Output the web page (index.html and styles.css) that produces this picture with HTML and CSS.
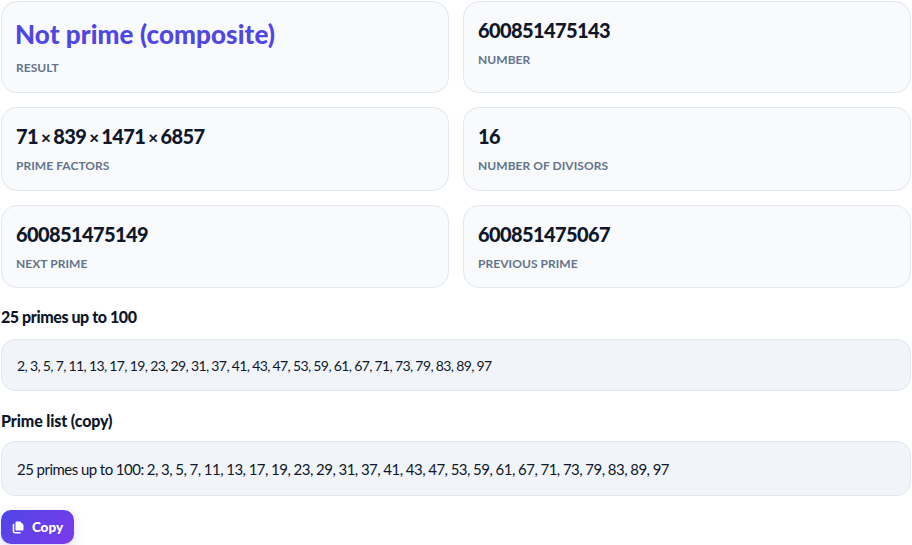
FILE: index.html
```html
<!DOCTYPE html>
<html lang="en">

<head>
    <meta charset="UTF-8">
    <meta name="viewport" content="width=device-width, initial-scale=1.0">
    <title>Prime checker</title>
    <link rel="stylesheet" href="styles.css">
</head>

<body>
    <div class="container">
        <div class="cards">
            <div class="card">
                <div class="value value-result">Not prime (composite)</div>
                <div class="label">Result</div>
            </div>
            <div class="card">
                <div class="value">600851475143</div>
                <div class="label">Number</div>
            </div>
            <div class="card">
                <div class="value">71 <span class="times">×</span> 839 <span class="times">×</span> 1471 <span class="times">×</span> 6857</div>
                <div class="label">Prime factors</div>
            </div>
            <div class="card">
                <div class="value">16</div>
                <div class="label">Number of divisors</div>
            </div>
            <div class="card">
                <div class="value">600851475149</div>
                <div class="label">Next prime</div>
            </div>
            <div class="card">
                <div class="value">600851475067</div>
                <div class="label">Previous prime</div>
            </div>
        </div>

        <h3 class="list-title">25 primes up to 100</h3>
        <div class="list-box">2, 3, 5, 7, 11, 13, 17, 19, 23, 29, 31, 37, 41, 43, 47, 53, 59, 61, 67, 71, 73, 79, 83, 89, 97</div>

        <h3 class="list-title list-title-copy">Prime list (copy)</h3>
        <div class="list-box list-box-copy">25 primes up to 100: 2, 3, 5, 7, 11, 13, 17, 19, 23, 29, 31, 37, 41, 43, 47, 53, 59, 61, 67, 71, 73, 79, 83, 89, 97</div>

        <button class="copy-btn" type="button">
            <svg class="copy-icon" viewBox="0 0 12 13" width="12" height="13" aria-hidden="true">
                <path d="M4.500 .5h3.300c.3 0 .5.1.7.3l2.700 2.700c.2.2.3.4.3.7v4.300c0 .6-.4 1-1 1H4.500c-.6 0-1-.4-1-1v-7c0-.6.4-1 1-1z" fill="#fff"/>
                <path d="M1.500 3.500v6.800c0 .9.6 1.500 1.500 1.500h5" fill="none" stroke="#fff" stroke-width="1.600" stroke-linecap="round"/>
            </svg>
            Copy
        </button>
    </div>
</body>

</html>
```

FILE: styles.css
```css
* {
    margin: 0;
    padding: 0;
    box-sizing: border-box;
}

html,
body {
    height: 545px;
    overflow: hidden;
}

body {
    font-family: "Lato", sans-serif;
    background-color: #fff;
    color: #0f172a;
}

.container {
    padding: 1px;
}

.cards {
    display: grid;
    grid-template-columns: 1fr 1fr;
    grid-template-rows: 92px 84px 83px;
    gap: 14px;
}

.card {
    background-color: #f8fafc;
    border: 1px solid #e2e8f0;
    border-radius: 16px;
    padding: 14px;
}

.value {
    font-size: 20px;
    line-height: 28px;
    font-weight: 900;
    letter-spacing: -0.6px;
    word-spacing: -1.2px;
    color: #0f172a;
}

.times {
    font-size: 17px;
    line-height: 1;
}

.value-result {
    margin-left: -1px;
    font-size: 26px;
    line-height: 36px;
    letter-spacing: 0.1px;
    word-spacing: 0;
    color: #4f46e5;
}

.label {
    margin-top: 8px;
    font-size: 12px;
    line-height: 16px;
    font-weight: 700;
    letter-spacing: 0.05px;
    text-transform: uppercase;
    color: #64748b;
}

.list-title {
    margin-top: 19px;
    font-size: 16px;
    line-height: 20px;
    font-weight: 900;
    letter-spacing: -0.42px;
    color: #0f172a;
}

.list-title-copy {
    margin-top: 20px;
    letter-spacing: -0.12px;
}

.list-box {
    margin-top: 12px;
    height: 52px;
    padding: 0 15px;
    display: flex;
    align-items: center;
    background-color: #f1f5f9;
    border: 1px solid #e2e8f0;
    border-radius: 14px;
    font-size: 14px;
    letter-spacing: -0.6px;
    word-spacing: -0.2px;
    color: #0f172a;
}

.list-box-copy {
    margin-top: 10px;
    height: 55px;
    font-size: 15px;
    letter-spacing: -0.5px;
}

.copy-btn {
    margin-top: 14px;
    height: 34px;
    width: 73px;
    display: flex;
    align-items: center;
    justify-content: center;
    gap: 8px;
    border: none;
    border-radius: 10px;
    background: linear-gradient(135deg, #4f46e5, #7c3aed);
    box-shadow: 0 4px 12px rgba(79, 70, 229, 0.2);
    color: #fff;
    font-family: inherit;
    font-size: 13.500px;
    font-weight: 900;
}

.copy-icon {
    flex: none;
}
```
